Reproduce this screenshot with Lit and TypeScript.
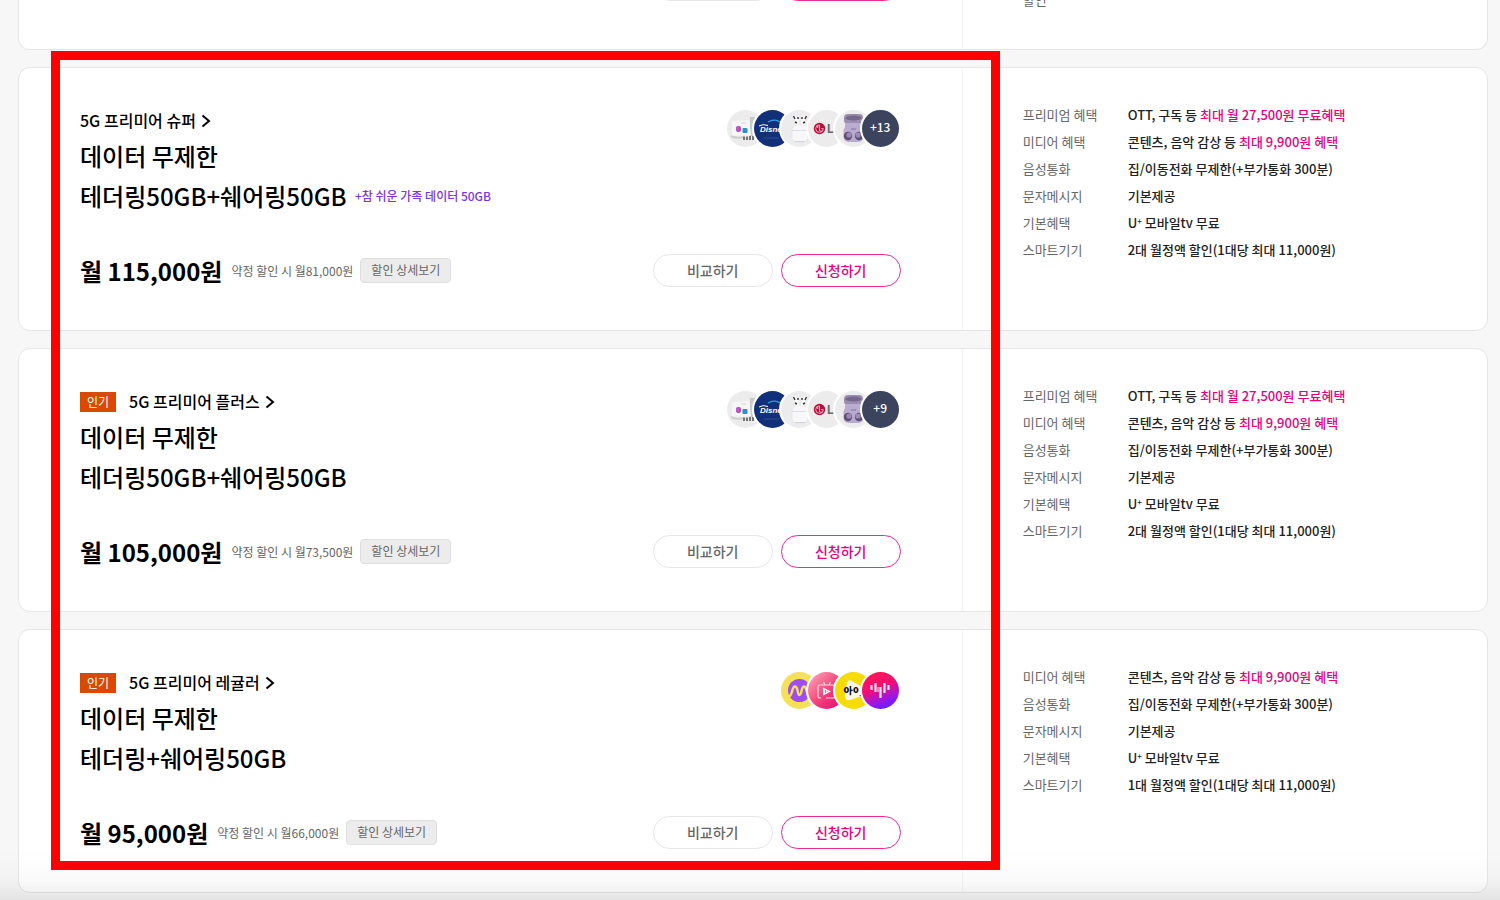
import { LitElement, html, css, svg, nothing, TemplateResult } from "lit";
import { customElement, property } from "lit/decorators.js";

interface Benefit {
  label: string;
  text: string;
  highlight?: string;
  plus?: boolean;
}

interface Plan {
  name: string;
  popular?: boolean;
  data: string;
  sharing: string;
  extra?: string;
  price: string;
  discounted: string;
  perks: string[];
  more?: string;
  benefits: Benefit[];
}

const premium: Benefit = { label: "프리미엄 혜택", text: "OTT, 구독 등 ", highlight: "최대 월 27,500원 무료혜택" };
const common = (devices: string): Benefit[] => [
  { label: "미디어 혜택", text: "콘텐츠, 음악 감상 등 ", highlight: "최대 9,900원 혜택" },
  { label: "음성통화", text: "집/이동전화 무제한(+부가통화 300분)" },
  { label: "문자메시지", text: "기본제공" },
  { label: "기본혜택", text: " 모바일tv 무료", plus: true },
  { label: "스마트기기", text: devices },
];

const plans: Plan[] = [
  {
    name: "5G 프리미어 슈퍼",
    data: "데이터 무제한",
    sharing: "테더링50GB+쉐어링50GB",
    extra: "+참 쉬운 가족 데이터 50GB",
    price: "월 115,000원",
    discounted: "약정 할인 시 월81,000원",
    perks: ["cards", "disney", "airpods", "lg", "buds"],
    more: "+13",
    benefits: [premium, ...common("2대 월정액 할인(1대당 최대 11,000원)")],
  },
  {
    name: "5G 프리미어 플러스",
    popular: true,
    data: "데이터 무제한",
    sharing: "테더링50GB+쉐어링50GB",
    price: "월 105,000원",
    discounted: "약정 할인 시 월73,500원",
    perks: ["cards", "disney", "airpods", "lg", "buds"],
    more: "+9",
    benefits: [premium, ...common("2대 월정액 할인(1대당 최대 11,000원)")],
  },
  {
    name: "5G 프리미어 레귤러",
    popular: true,
    data: "데이터 무제한",
    sharing: "테더링+쉐어링50GB",
    price: "월 95,000원",
    discounted: "약정 할인 시 월66,000원",
    perks: ["millie", "tv", "kids", "music"],
    benefits: common("1대 월정액 할인(1대당 최대 11,000원)"),
  },
];

const art: Record<string, TemplateResult> = {
  cards: svg`
    <rect width="37" height="37" fill="#ececec"/>
    <rect x="23" y="7" width="6" height="19" fill="#c9cbcb"/>
    <path d="M5 11 L22 10 L24 25 L5 26 Z" fill="#f6f6f6"/>
    <path d="M4 26 Q10 29 16 27" stroke="#cfcfcf" stroke-width="2" fill="none"/>
    <rect x="9" y="16" width="5" height="6" rx="2" fill="#a04fe0"/>
    <path d="M9 19 L12 16 L12 21 Z" fill="#e0559b"/>
    <rect x="15.500" y="18" width="5" height="5" rx="1" fill="#2f8fbd"/>
    <path d="M14 13h5" stroke="#d4d4d4"/>
    <path d="M17 26.500v3.500M20 26.500v3.500M23 26v4M26 26v4" stroke="#4b4b4b" stroke-width="1.500"/>`,
  disney: svg`
    <rect width="37" height="37" fill="#12307a"/>
    <path d="M14 12 Q22 7 30 15" stroke="#2aa3dc" stroke-width="1.200" fill="none"/>
    <text x="6" y="22" font-family="Liberation Sans, sans-serif" font-size="8" font-style="italic" font-weight="700" fill="#fff">Disney</text>
    <path d="M5 16 Q9 13.500 14 15.500" stroke="#fff" stroke-width="1" fill="none"/>
    <path d="M10 28h15" stroke="#3c5597" stroke-width=".8"/>`,
  airpods: svg`
    <rect width="37" height="37" fill="#ececec"/>
    <path d="M12 6 Q15 4 17 7 L18 15 L15 15 L14 11 Z M26 6 Q23 4 21 7 L20 15 L23 15 L24 11 Z" fill="#fcfcfc"/>
    <path d="M12.500 6l1.500 3M17 7v2M25.500 6L24 9M21 7v2M14 12l2 1M24 12l-2 1" stroke="#303338" stroke-width="1.400"/>
    <rect x="11" y="15" width="16" height="17" rx="5" fill="#f8f8fa" stroke="#e0e1e6" stroke-width=".6"/>
    <path d="M11 20.500h16" stroke="#d5d7dd" stroke-width=".8"/>
    <path d="M14 31.500h10" stroke="#d2d4da"/>`,
  lg: svg`
    <rect width="37" height="37" fill="#ececec"/>
    <circle cx="11.500" cy="18.500" r="5.700" fill="#b80f3c"/>
    <path d="M11.500 15v6h2M11.500 14.800a3.800 3.800 0 1 0 3.800 3.800h-2" fill="none" stroke="#f3cdd7" stroke-width=".8"/>
    <circle cx="9.700" cy="17" r=".7" fill="#fff"/>
    <text x="19" y="23" font-family="Liberation Sans, sans-serif" font-size="12" font-weight="700" fill="#686868">L</text>`,
  buds: svg`
    <rect width="37" height="37" fill="#ececec"/>
    <rect x="9" y="4" width="19" height="10" rx="4" fill="#9a8db0"/>
    <ellipse cx="18.500" cy="8" rx="8" ry="2.500" fill="#75698a"/>
    <rect x="10" y="13" width="17" height="5" fill="#b9add0"/>
    <rect x="8.500" y="16" width="20" height="16" rx="5" fill="#b9abd0"/>
    <circle cx="13" cy="26" r="4.200" fill="#5d5171"/>
    <circle cx="24" cy="26" r="4.200" fill="#5d5171"/>
    <circle cx="14" cy="25" r="2.600" fill="#9a8ab5"/>
    <circle cx="23" cy="25" r="2.600" fill="#9a8ab5"/>
    <path d="M16 19h5" stroke="#81739b"/>`,
  millie: svg`
    <rect width="37" height="37" fill="#f5e05a"/>
    <circle cx="18.500" cy="18.500" r="11.500" fill="#a04df0"/>
    <path d="M8 24C11.500 24.500 10.500 14.500 14 14.500s2 8.500 4.500 8.500S20 14.500 23 14.500s2 9 6 9.500" fill="none" stroke="#f5e05a" stroke-width="2.400" stroke-linecap="round"/>`,
  tv: svg`
    <defs><linearGradient id="tvg" x1="0" y1="0" x2="1" y2="1"><stop offset="0" stop-color="#ffb0bd"/><stop offset=".5" stop-color="#f4467d"/><stop offset="1" stop-color="#e5006e"/></linearGradient></defs>
    <rect width="37" height="37" fill="url(#tvg)"/>
    <path d="M13 26h-1q-2 0-2-2V15q0-2 2-2h13q2 0 2 2v9q0 2-2 2h-7M15.500 10l1.500 3M22.500 10L21 13" fill="none" stroke="#ffd9e3" stroke-width="1.200"/>
    <path d="M15 15.500l8 4-8 4z" fill="#fff"/>
    <path d="M17.500 18v3M19 18.700v1.600" stroke="#ef3478" stroke-width=".7"/>`,
  kids: svg`
    <rect width="37" height="37" fill="#f5dc05"/>
    <path d="M12 11q1-4 5-2l10 6q4 3 2 6-1 3-5 4l-9 3q-5 1-5-4z" fill="#faf6e6"/>
    <g font-family="Noto Sans CJK KR, sans-serif" font-size="9" font-weight="900" fill="#111">
      <text x="8.500" y="21">o</text><text x="11.500" y="21.500">ㅏ</text><text x="18" y="21">o</text>
    </g>
    <circle cx="25.500" cy="23.500" r=".8" fill="#111"/>`,
  music: svg`
    <defs><linearGradient id="mug" x1=".3" y1="0" x2=".7" y2="1"><stop offset="0" stop-color="#ff1457"/><stop offset=".4" stop-color="#ee1273"/><stop offset=".72" stop-color="#a516dc"/><stop offset="1" stop-color="#5b22ff"/></linearGradient></defs>
    <rect width="37" height="37" fill="url(#mug)"/>
    <path d="M9.500 13v5M13.500 11v9M18.500 15v11M22.500 11v10M26.500 13v5" stroke="#fff" stroke-width="2.200" opacity=".9"/>
    <path d="M16 15v5" stroke="#fff" stroke-width="1.200" opacity=".8"/>`,
};

@customElement("perk-icons")
class PerkIcons extends LitElement {
  @property({ attribute: false }) perks: string[] = [];
  @property() more = "";

  static styles = css`
    :host { display: flex; flex: none; }
    .perk {
      box-sizing: border-box;
      width: 41px;
      height: 41px;
      border: 2px solid #fff;
      border-radius: 50%;
      overflow: hidden;
      background: #fff;
    }
    .perk + .perk { margin-left: -14px; }
    .perk svg { display: block; width: 37px; height: 37px; }
    .more {
      background: #3c435d;
      color: #fff;
      font-size: 12px;
      font-weight: 500;
      line-height: 34px;
      text-align: center;
    }
  `;

  render() {
    return html`
      ${this.perks.map((p) => html`<span class="perk"><svg viewBox="0 0 37 37" aria-hidden="true">${art[p]}</svg></span>`)}
      ${this.more ? html`<span class="perk more">${this.more}</span>` : nothing}
    `;
  }
}

const cardStyles = css`
  .card {
    box-sizing: border-box;
    display: grid;
    grid-template-columns: 945fr 525fr;
    background: #fff;
    border: 1px solid #e6e6e6;
    border-radius: 12px;
  }
  .summary {
    display: flex;
    flex-direction: column;
    padding: 36px 61px 43px;
    border-right: 1px solid #f5f5f5;
  }
  .actions { display: flex; gap: 8px; margin-left: auto; }
  .action {
    box-sizing: border-box;
    width: 120px;
    height: 33px;
    padding: 0 0 2px;
    border: 1px solid #e6e6e6;
    border-radius: 17px;
    background: #fff;
    color: #666;
    font: 500 14px/20px "Noto Sans CJK KR", sans-serif;
    cursor: pointer;
  }
  .apply { border-color: #ec2a93; color: #e6007e; }
  .benefits { margin: 0; padding: 33px 24px 33px 60px; font-size: 13px; line-height: 27px; }
  .benefit { display: grid; grid-template-columns: 105px 1fr; }
  dt { color: #666; }
  dd { margin: 0; color: #222; font-weight: 500; }
`;

@customElement("plan-card")
class PlanCard extends LitElement {
  @property({ attribute: false }) plan!: Plan;

  static styles = [
    cardStyles,
    css`
      :host { display: block; }
      .head { display: flex; justify-content: space-between; align-items: flex-start; }
      .head perk-icons { margin-top: 4px; }
      .name-row { display: flex; align-items: center; gap: 13px; height: 32px; }
      .badge {
        padding: 0 7px;
        background: #d94a00;
        color: #fff;
        font-size: 12px;
        line-height: 20px;
        margin-top: 2px;
      }
      .name {
        display: flex;
        align-items: center;
        gap: 5px;
        color: #000;
        font-size: 16px;
        font-weight: 500;
        line-height: 32px;
        text-decoration: none;
      }
      .chevron { width: 10px; height: 14px; margin-top: 2px; }
      .title { margin: 0; color: #000; font-size: 24px; font-weight: 500; line-height: 40px; }
      .extra { margin-left: 3px; color: #7b35d9; font-size: 12px; vertical-align: 5px; line-height: 20px; }
      .foot { display: flex; align-items: center; margin-top: 38px; }
      .price { color: #000; font-size: 24px; font-weight: 700; line-height: 32px; }
      .discounted { margin-left: 9px; color: #666; font-size: 12px; line-height: 20px; }
      .detail {
        box-sizing: border-box;
        height: 25px;
        margin-left: 7px;
        padding: 0 10px 2px;
        border: 1px solid #dfdfdf;
        border-radius: 4px;
        background: #ececec;
        color: #666;
        font: 400 12px/20px "Noto Sans CJK KR", sans-serif;
        cursor: pointer;
      }
      .hl { color: #e6007e; }
      .plus { font-size: 8px; line-height: 1; vertical-align: 4px; }
    `,
  ];

  render() {
    const p = this.plan;
    return html`
      <article class="card">
        <div class="summary">
          <div class="head">
            <div>
              <div class="name-row">
                ${p.popular ? html`<span class="badge">인기</span>` : nothing}
                <a class="name" href="#">${p.name}
                  <svg class="chevron" viewBox="0 0 10 14" aria-hidden="true"><path d="M1.500 1.500L8 7l-6.500 5.500" fill="none" stroke="#000" stroke-width="2"/></svg>
                </a>
              </div>
              <h3 class="title">${p.data}<br>${p.sharing}${p.extra ? html` <span class="extra">${p.extra}</span>` : nothing}</h3>
            </div>
            <perk-icons .perks=${p.perks} .more=${p.more ?? ""}></perk-icons>
          </div>
          <div class="foot">
            <strong class="price">${p.price}</strong>
            <span class="discounted">${p.discounted}</span>
            <button class="detail" type="button">할인 상세보기</button>
            <div class="actions">
              <button class="action" type="button">비교하기</button>
              <button class="action apply" type="button">신청하기</button>
            </div>
          </div>
        </div>
        <dl class="benefits">
          ${p.benefits.map((b) => html`
            <div class="benefit">
              <dt>${b.label}</dt>
              <dd>${b.plus ? html`U<span class="plus">+</span>` : nothing}${b.text}${b.highlight ? html`<span class="hl">${b.highlight}</span>` : nothing}</dd>
            </div>`)}
        </dl>
      </article>
    `;
  }
}

@customElement("app-root")
class AppRoot extends LitElement {
  static styles = [
    cardStyles,
    css`
      :host {
        display: block;
        position: relative;
        height: 100vh;
        overflow: hidden;
        background: #f7f7f7;
        font-family: "Noto Sans CJK KR", sans-serif;
      }
      .list { display: flex; flex-direction: column; gap: 17px; padding: 0 12px 0 18px; }
      .previous { margin-top: -32px; border-top: 0; border-radius: 0 0 12px 12px; }
      .previous .summary { padding-top: 0; padding-bottom: 48px; }
      .previous .benefits { padding-top: 18px; padding-bottom: 0; }
      .shade {
        position: absolute;
        inset: auto 0 0 0;
        height: 50px;
        background: linear-gradient(to bottom, rgba(0, 0, 0, 0), rgba(0, 0, 0, 0.02) 60%, rgba(0, 0, 0, 0.08));
        pointer-events: none;
      }
      .frame {
        position: absolute;
        inset: 51px 500px 30px 51px;
        border: 9px solid #f00;
        pointer-events: none;
      }
    `,
  ];

  render() {
    return html`
      <main class="list">
        <article class="card previous">
          <div class="summary">
            <div class="actions">
              <button class="action" type="button" aria-label="비교하기"></button>
              <button class="action apply" type="button" aria-label="신청하기"></button>
            </div>
          </div>
          <dl class="benefits"><div class="benefit"><dt>할인</dt></div></dl>
        </article>
        ${plans.map((p) => html`<plan-card .plan=${p}></plan-card>`)}
      </main>
      <div class="shade"></div>
      <div class="frame"></div>
    `;
  }
}
